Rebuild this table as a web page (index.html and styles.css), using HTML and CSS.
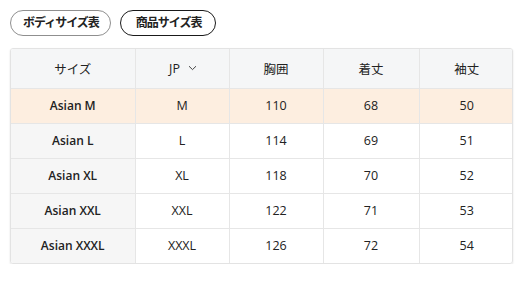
FILE: index.html
```html
<!DOCTYPE html>
<html lang="ja">
<head>
<meta charset="utf-8">
<link rel="stylesheet" href="styles.css">
</head>
<body>
<div class="page">
  <div class="tabs">
    <button class="tab">ボディサイズ表</button>
    <button class="tab active">商品サイズ表</button>
  </div>
  <div class="table-wrap">
    <table class="size-table">
      <colgroup>
        <col class="c1"><col class="c2"><col class="c3"><col class="c4"><col class="c5">
      </colgroup>
      <thead>
        <tr>
          <th>サイズ</th>
          <th><span class="jp">JP<svg class="chev" width="9" height="6" viewBox="0 0 9 6"><path d="M1 1.2 L4.5 4.6 L8 1.2" fill="none" stroke="#444" stroke-width="1"/></svg></span></th>
          <th>胸囲</th>
          <th>着丈</th>
          <th>袖丈</th>
        </tr>
      </thead>
      <tbody>
        <tr class="hl"><td class="name">Asian M</td><td>M</td><td>110</td><td>68</td><td>50</td></tr>
        <tr><td class="name">Asian L</td><td>L</td><td>114</td><td>69</td><td>51</td></tr>
        <tr><td class="name">Asian XL</td><td>XL</td><td>118</td><td>70</td><td>52</td></tr>
        <tr><td class="name">Asian XXL</td><td>XXL</td><td>122</td><td>71</td><td>53</td></tr>
        <tr><td class="name">Asian XXXL</td><td>XXXL</td><td>126</td><td>72</td><td>54</td></tr>
      </tbody>
    </table>
  </div>
</div>
</body>
</html>
```
FILE: styles.css
```css
* { box-sizing: border-box; }
html, body { margin: 0; padding: 0; background: #fff; }
body {
  font-family: "Open Sans", "Noto Sans CJK JP", sans-serif;
  color: #222;
  font-size: 12.5px;
}
.page { padding: 10px 18px 0 10px; }
.tabs { display: flex; gap: 9px; }
.tab {
  font-family: "Open Sans", "Noto Sans CJK JP", sans-serif;
  font-size: 12px;
  letter-spacing: -1px;
  font-weight: 700;
  color: #222;
  height: 26px;
  padding: 0 11px 0 12px;
  border: 1px solid #8f8f8f;
  border-radius: 13px;
  background: #fff;
  line-height: 24px;
}
.tab.active { border-color: #1a1a1a; padding: 0 14px 0 15px; }
.table-wrap {
  margin-top: 12px;
  width: 503px;
  border: 1px solid #e3e3e3;
  border-radius: 3px;
  box-shadow: 0 1px 2px rgba(0,0,0,0.12);
  overflow: hidden;
}
.size-table {
  width: 100%;
  border-collapse: collapse;
  table-layout: fixed;
}
.c1 { width: 124px; }
.c2 { width: 94px; }
.c3 { width: 94px; }
.c4 { width: 96px; }
.c5 { width: 95px; }
.size-table th, .size-table td {
  text-align: center;
  border-right: 1px solid #e6e6e6;
  border-bottom: 1px solid #e6e6e6;
  padding: 0;
  font-weight: 400;
}
.size-table th:last-child, .size-table td:last-child { border-right: none; }
.size-table tbody tr:last-child td { border-bottom: none; }
.size-table th { height: 39px; background: #f5f6f7; }
.size-table td { height: 35px; }
.size-table td.name { background: #f6f6f6; font-weight: 600; font-size: 12px; }
.size-table tr.hl td { background: #fdeee0; }
.jp { display: inline-flex; align-items: center; gap: 8px; padding-left: 2px; }
.chev { display: block; }
```
